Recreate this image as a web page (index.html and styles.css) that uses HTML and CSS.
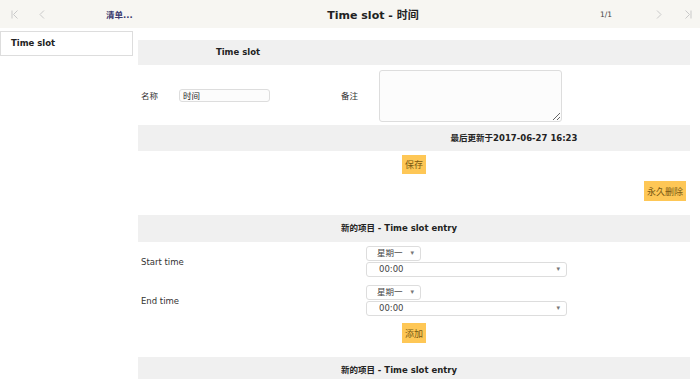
FILE: index.html
```html
<!DOCTYPE html>
<html lang="zh">
<head>
    <meta charset="UTF-8">
    <title>Time slot - 时间</title>
    <link rel="stylesheet" href="styles.css">
</head>
<body>
    <!-- Top bar -->
    <div class="topbar">
        <div class="nav-left">
            <span class="nav-btn first">
                <svg width="8" height="9" viewBox="0 0 8 9"><path d="M1 0.5v8M6.5 0.5L2.5 4.5l4 4" fill="none" stroke="#c9c9c9" stroke-width="1"/></svg>
            </span>
            <span class="nav-btn">
                <svg width="6" height="9" viewBox="0 0 6 9"><path d="M5 0.5L1 4.5l4 4" fill="none" stroke="#c9c9c9" stroke-width="1"/></svg>
            </span>
            <a class="list-link" href="#">清单...</a>
        </div>
        <h1 class="title">Time slot - 时间</h1>
        <div class="nav-right">
            <span class="pager">1/1</span>
            <span class="nav-btn">
                <svg width="6" height="9" viewBox="0 0 6 9"><path d="M1 0.5l4 4-4 4" fill="none" stroke="#c9c9c9" stroke-width="1"/></svg>
            </span>
            <span class="nav-btn last">
                <svg width="8" height="9" viewBox="0 0 8 9"><path d="M1.5 0.5l4 4-4 4M7 0.5v8" fill="none" stroke="#c9c9c9" stroke-width="1"/></svg>
            </span>
        </div>
    </div>

    <div class="layout">
        <!-- Sidebar -->
        <div class="sidebar">
            <div class="side-item">Time slot</div>
        </div>

        <!-- Main form -->
        <div class="main">
            <div class="record">
                <div class="bar">
                    <div class="bar-cell">Time slot</div>
                    <div class="bar-cell"></div>
                </div>
                <div class="fields">
                    <div class="field">
                        <label for="name">名称</label>
                        <input type="text" id="name" class="text-input" value="时间">
                    </div>
                    <div class="field">
                        <label for="note">备注</label>
                        <textarea id="note" class="note-input"></textarea>
                    </div>
                </div>
                <div class="bar">
                    <div class="bar-cell"></div>
                    <div class="bar-cell">最后更新于2017-06-27 16:23</div>
                </div>
            </div>

            <div class="actions">
                <button class="btn">保存</button>
            </div>
            <div class="actions right">
                <button class="btn">永久删除</button>
            </div>

            <!-- New entry -->
            <div class="entry">
                <div class="entry-head">新的项目 - Time slot entry</div>
                <div class="entry-row">
                    <span class="entry-label">Start time</span>
                    <div class="pickers">
                        <div class="select small">星期一<span class="caret">▾</span></div>
                        <div class="select wide">00:00<span class="caret">▾</span></div>
                    </div>
                </div>
                <div class="entry-row">
                    <span class="entry-label">End time</span>
                    <div class="pickers">
                        <div class="select small">星期一<span class="caret">▾</span></div>
                        <div class="select wide">00:00<span class="caret">▾</span></div>
                    </div>
                </div>
                <div class="actions add">
                    <button class="btn">添加</button>
                </div>
            </div>

            <div class="entry">
                <div class="entry-head">新的项目 - Time slot entry</div>
            </div>
        </div>
    </div>
</body>
</html>
```

FILE: styles.css
```css
/* General */
body {
    margin: 0;
    font-family: "DejaVu Sans", "Noto Sans CJK SC", sans-serif;
    font-size: 8.5px;
    color: #333;
    background-color: #fff;
    overflow: hidden;
}

/* Top bar */
.topbar {
    display: flex;
    align-items: center;
    height: 28px;
    background-color: #f7f6f2;
}

.nav-left {
    display: flex;
    align-items: center;
    width: 140px;
    padding-left: 11px;
    box-sizing: border-box;
}

.nav-btn {
    display: flex;
    align-items: center;
    width: 28px;
}

.list-link {
    margin-left: 39px;
    color: #3b3b70;
    text-decoration: none;
    font-weight: bold;
}

.title {
    flex: 1;
    margin: 0;
    padding-left: 6px;
    text-align: center;
    font-size: 11px;
    font-weight: bold;
    color: #222;
}

.nav-right {
    display: flex;
    align-items: center;
    width: 100px;
}

.pager {
    width: 56px;
    color: #444;
    font-size: 7.5px;
}

.nav-right .nav-btn.last {
    width: auto;
}

/* Layout */
.layout {
    display: flex;
    padding-top: 3px;
}

.sidebar {
    width: 138px;
    flex-shrink: 0;
}

.side-item {
    width: 133px;
    height: 25px;
    box-sizing: border-box;
    border: 1px solid #ddd;
    padding: 6px 0 0 10px;
    font-weight: bold;
    color: #222;
}

.main {
    width: 552px;
    padding-top: 9px;
}

/* Record */
.bar {
    display: grid;
    grid-template-columns: 200px 1fr;
    background-color: #f0f0f0;
    font-weight: bold;
    color: #222;
}

.bar-cell {
    text-align: center;
    height: 25px;
    line-height: 25px;
}

.record .bar:last-child .bar-cell {
    height: 26px;
    line-height: 26px;
}

.fields {
    display: grid;
    grid-template-columns: 200px 1fr;
    height: 60px;
}

.field {
    display: flex;
    align-items: center;
}

.field label {
    width: 41px;
    padding-left: 3px;
    box-sizing: border-box;
    flex-shrink: 0;
}

.text-input {
    width: 91px;
    height: 13px;
    box-sizing: border-box;
    border: 1px solid #ddd;
    border-radius: 3px;
    padding: 0 3px;
    font-family: inherit;
    font-size: 8.5px;
    color: #222;
    background-color: #fcfcfc;
}

.note-input {
    width: 183px;
    height: 52px;
    box-sizing: border-box;
    border: 1px solid #ddd;
    border-radius: 3px;
    background-color: #fcfcfc;
    margin-top: 1px;
}

/* Buttons */
.actions {
    display: flex;
    justify-content: center;
    padding-top: 4px;
}

.actions.right {
    justify-content: flex-end;
    padding-top: 7px;
    padding-right: 4px;
}

.btn {
    height: 19px;
    padding: 0 3px;
    border: none;
    background-color: #fec756;
    color: #7a5a12;
    font-family: "Noto Sans CJK SC", sans-serif;
    font-size: 9px;
    cursor: pointer;
}

.actions.right .btn {
    height: 20px;
}

/* New entry */
.entry {
    margin-top: 14px;
}

.entry-head {
    height: 27px;
    line-height: 27px;
    background-color: #f0f0f0;
    text-align: center;
    padding-right: 30px;
    font-weight: bold;
    color: #222;
}

.entry-row {
    display: flex;
    align-items: center;
    padding-top: 4px;
}

.entry-row + .entry-row {
    padding-top: 8px;
}

.entry-label {
    width: 228px;
    padding-left: 3px;
    box-sizing: border-box;
}

.pickers {
    display: flex;
    flex-direction: column;
    gap: 1px;
}

.select {
    position: relative;
    box-sizing: border-box;
    border: 1px solid #ddd;
    border-radius: 3px;
    background-color: #fff;
    color: #444;
    font-family: "DejaVu Sans", "Noto Sans CJK SC", sans-serif;
}

.select.small {
    width: 55px;
    height: 15px;
    line-height: 13px;
    padding-left: 10px;
}

.select.wide {
    width: 201px;
    height: 15px;
    line-height: 13px;
    padding-left: 12px;
}

.caret {
    position: absolute;
    right: 6px;
    top: 0;
    font-size: 7px;
    color: #777;
}

.actions.add {
    padding-top: 7px;
}

.actions.add .btn {
    height: 20px;
}

.entry + .entry {
    margin-top: 14px;
}
```
